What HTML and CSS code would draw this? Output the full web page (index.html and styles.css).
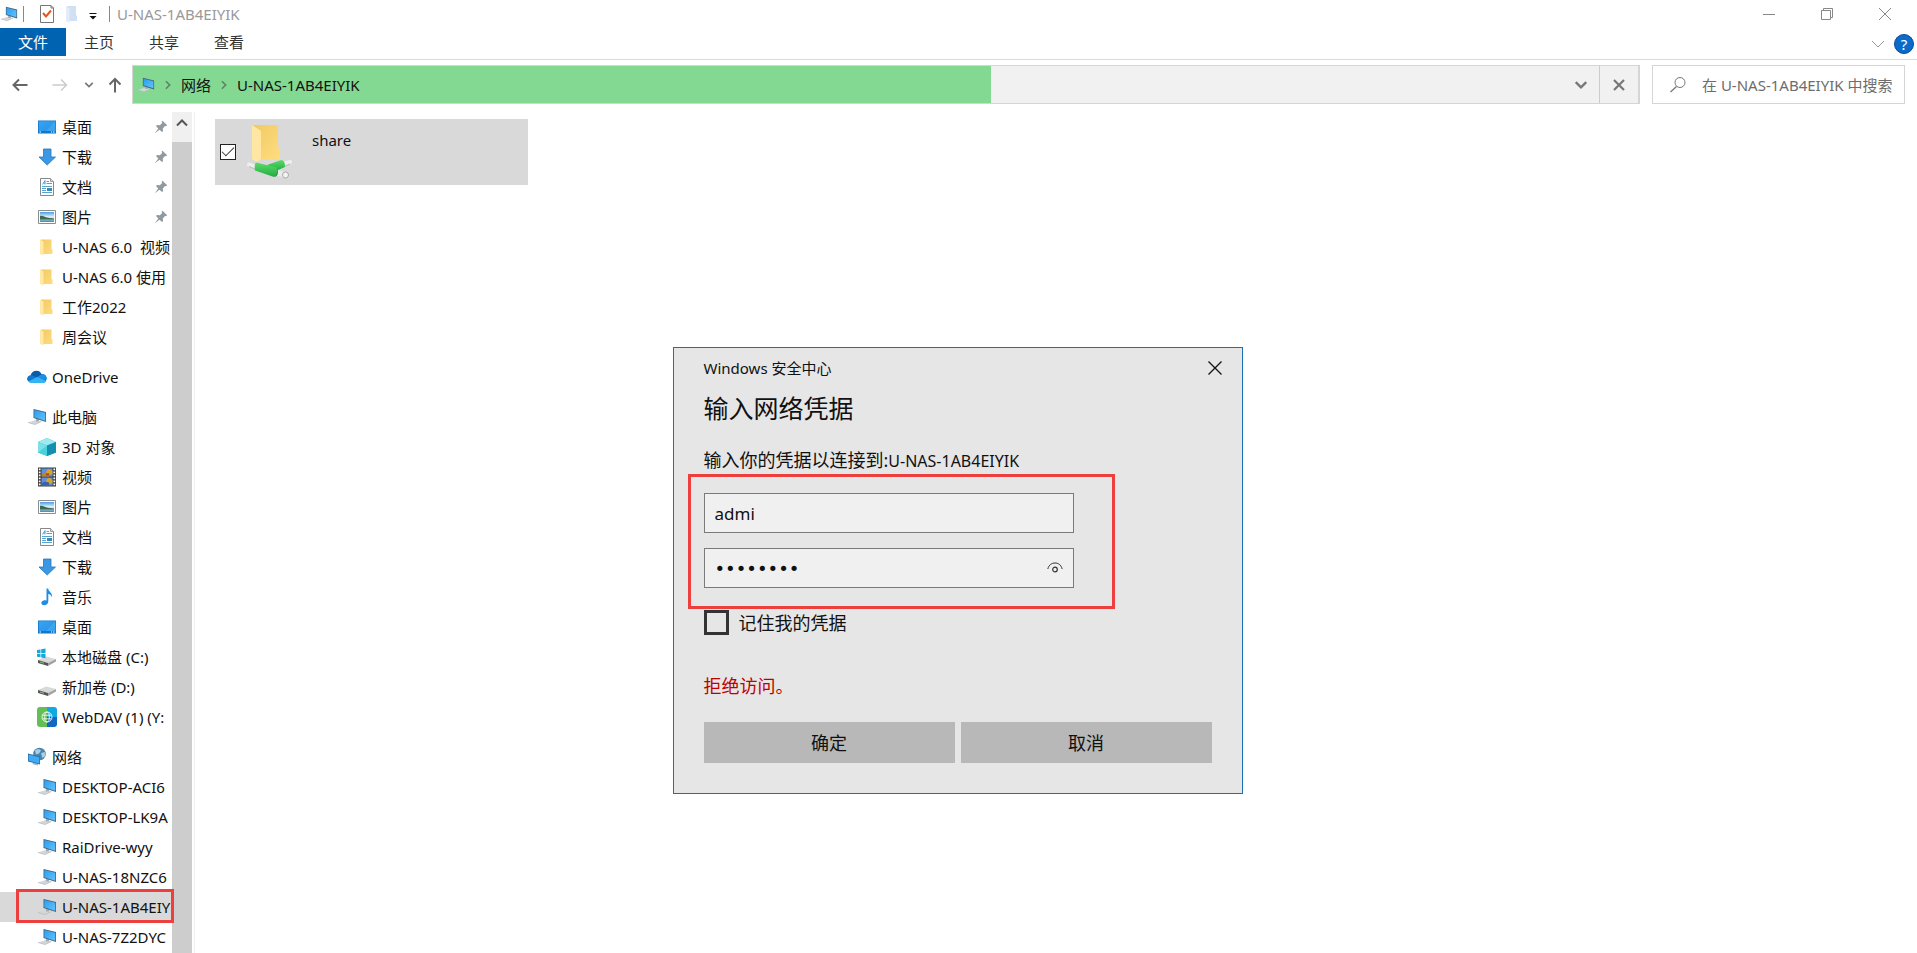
FILE: index.html
```
<!DOCTYPE html>
<html lang="zh-CN">
<head>
    <meta charset="UTF-8">
    <title>U-NAS-1AB4EIYIK</title>
    <link rel="stylesheet" href="styles.css">
</head>
<body>
    <!-- shared icons -->
    <svg class="sprite" aria-hidden="true">
        <defs>
            <linearGradient id="g-blue" x1="0" y1="0" x2="1" y2="1"><stop offset="0" stop-color="#35a5f3"/><stop offset="1" stop-color="#2b8fe6"/></linearGradient>
            <linearGradient id="g-screen" x1="0" y1="0" x2="1" y2="1"><stop offset="0" stop-color="#2a9df0"/><stop offset="1" stop-color="#62c3ff"/></linearGradient>
            <linearGradient id="g-folder" x1="0" y1="0" x2="1" y2="1"><stop offset="0" stop-color="#f0ca62"/><stop offset="1" stop-color="#ffdc80"/></linearGradient>
            <linearGradient id="g-green" x1="0" y1="0" x2="0" y2="1"><stop offset="0" stop-color="#5fd96c"/><stop offset="1" stop-color="#1fae3f"/></linearGradient>
            <linearGradient id="g-sky" x1="0" y1="0" x2="0" y2="1"><stop offset="0" stop-color="#4f9be0"/><stop offset=".5" stop-color="#e6f4fb"/><stop offset="1" stop-color="#4b86a8"/></linearGradient>
            <symbol id="i-pc" viewBox="0 0 20 20">
                <path d="M1 15.500 8.500 13l6 1.500L8 17.500z" fill="#d3d7da"/>
                <path d="M1 15.500 8 17.500l6.500-3" fill="none" stroke="#b2b8bd" stroke-width=".7"/>
                <path d="M9 11.500 12 12v2.500H9z" fill="#a5adb4"/>
                <path d="M6.500 2 19 5v10L6.500 11z" fill="#46647d"/>
                <path d="M7.300 3 18.200 5.700v8L7.300 10.300z" fill="url(#g-screen)"/>
            </symbol>
            <symbol id="i-desktop" viewBox="0 0 20 20">
                <path d="M1 3.500h18v13H1z" fill="#0f76c8"/>
                <path d="M1.700 4.200h16.600v9.800H1.700z" fill="url(#g-blue)"/>
                <path d="M9 14 18.300 4.200V14z" fill="#4db4f8" opacity=".5"/>
                <path d="M2.500 15h1.500M14 15h1M16 15h1.500" stroke="#fff"/>
            </symbol>
            <symbol id="i-download" viewBox="0 0 20 20">
                <path d="M6.500 2h7.500v8h4.500L10.200 18 2 10h4.500z" fill="#3d98e4" stroke="#2277c2" stroke-width=".8"/>
            </symbol>
            <symbol id="i-doc" viewBox="0 0 20 20">
                <path d="M3.500 1.500h10L16.500 4.500v14h-13z" fill="#fff" stroke="#85898c"/>
                <path d="M13.500 1.500v3h3" fill="#ddd" stroke="#85898c" stroke-width=".8"/>
                <path d="M5.500 7.500 8 3.500v4M6.500 6H8M9.500 4.500H12M9.500 6.500h5.500M5 9.500h10M5 11.500h4M5 13.500h4M5 15.500h10" stroke="#3f9bcb" stroke-width=".9" fill="none"/>
                <path d="M10 11h5v3h-5z" fill="#3c86ad"/>
            </symbol>
            <symbol id="i-picture" viewBox="0 0 20 20">
                <path d="M1.500 3.500h17v13h-17z" fill="#fff" stroke="#8a8e92"/>
                <path d="M3 5h14v10H3z" fill="url(#g-sky)"/>
                <path d="M3 9c3-1 5 1.500 8 1.800l6 .7V12.500H3z" fill="#3b6b50"/>
            </symbol>
            <symbol id="i-folder" viewBox="0 0 20 20">
                <path d="M4 2.500h10.500V12l1 1v4H4z" fill="url(#g-folder)"/>
                <path d="M3 2.500 6.500 4.500V18.500L3 17z" fill="#ffe8a8"/>
            </symbol>
            <symbol id="i-cloud" viewBox="0 0 20 20">
                <path d="M5 15.500A4 4 0 0 1 3.500 8.500 6 6 0 0 1 14.500 7 4.500 4.500 0 0 1 17 15.500z" fill="#1177d1"/>
                <path d="M4 8.500C5 3.500 12 1.500 14.500 7.500L9 11z" fill="#0a5cab"/>
                <path d="M0 12.500C0 9.500 2 8 4.500 8.200L10 10.500 2 15z" fill="#1177d1"/>
                <path d="M9 11 14.500 7.300C18.500 7 20 9.500 19.800 12.500z" fill="#1a8fe3"/>
                <path d="M1.500 14.500 10 10l9.500 4C18.500 15.500 17.500 16 16 16H4Q2.500 16 1.500 14.500z" fill="#35b3f2"/>
            </symbol>
            <symbol id="i-cube" viewBox="0 0 20 20">
                <path d="M1 5 10 1l9 4v10.500L10 19 1 15.500z" fill="#28b4cc"/>
                <path d="M1 5 10 1l9 4-9 3.500z" fill="#9eeaf0"/>
                <path d="M1 5l9 3.500V19l-9-3.500z" fill="#4bd0dd"/>
                <path d="M1 5v10.500L10 8.500z" fill="#7be0e8"/>
                <path d="M19 5v10.500L10 19V8.500z" fill="#138fb0"/>
            </symbol>
            <symbol id="i-film" viewBox="0 0 20 20">
                <path d="M1 .5h18v19H1z" fill="#3b3b3b"/>
                <path d="M4.500 1.500h11v8h-11zM4.500 10.500h11v8h-11z" fill="#5f8fdf"/>
                <path d="M9 5l2-3 3 .5 1.500 2v3H9z" fill="#d5a622"/>
                <path d="M5 7l3-1.500 4 1v3H5z" fill="#b8872a"/>
                <path d="M9 6.500h3v2H9z" fill="#c23a2e"/>
                <path d="M9 14l2-3 3 .5 1.500 2v3H9z" fill="#d5a622"/>
                <path d="M5 16l3-1.500 4 1v3H5z" fill="#3d5fb0"/>
                <path d="M2.700 1.500v17.500M17.300 1.500v17.500" stroke="#fff" stroke-width="1.700" stroke-dasharray="1.700 1.300"/>
            </symbol>
            <symbol id="i-music" viewBox="0 0 20 20">
                <path d="M9.500 1.500h1.700c.3 3.500 4.800 4 3.800 9-.6-2.500-2-3.200-3.700-3.500v7.500c0 2.500-2.300 4-4.500 3.800-3-.3-3.500-4.300.5-5 1-.2 1.700 0 2.200.2z" fill="#1e8fe8"/>
            </symbol>
            <symbol id="i-drive" viewBox="0 0 20 20">
                <path d="M1 13 9 9.500l10 2.500-8 4z" fill="#d9d9d9"/>
                <path d="M1 13l10 3v3L1 16z" fill="#555"/>
                <path d="M11 16l8-4v2.500L11 19z" fill="#a2a2a2"/>
                <path d="M3 15l4 1.200" stroke="#9ad69a" stroke-width=".8"/>
            </symbol>
            <symbol id="i-drive-win" viewBox="0 0 20 20">
                <use href="#i-drive" width="20" height="20"/>
                <path d="M0 3l3.500-.6V6H0zM4.200 2.200 8.500 1.500V6H4.200zM0 6.700h3.500v3.600L0 9.700zM4.200 6.700h4.300v4.500l-4.300-.7z" fill="#13a9e0"/>
            </symbol>
            <symbol id="i-webdav" viewBox="0 0 20 20">
                <path d="M3 0h7v20H3a3 3 0 0 1-3-3V3a3 3 0 0 1 3-3z" fill="#63bf55"/>
                <path d="M10 0h7a3 3 0 0 1 3 3v7H10z" fill="#12a8e0"/>
                <path d="M10 10h10v7a3 3 0 0 1-3 3h-7z" fill="#1268c0"/>
                <g fill="none" stroke="#fff" stroke-width=".8"><circle cx="10" cy="10" r="5"/><ellipse cx="10" cy="10" rx="2.300" ry="5"/><path d="M5.500 8.200h9M5.500 11.800h9"/></g>
            </symbol>
            <symbol id="i-network" viewBox="0 0 20 20">
                <circle cx="12.500" cy="7" r="6.300" fill="#4686ad"/>
                <path d="M8 3.500c2-2 5-1.500 6 0l-2 3-3 1zM14 6l4-1 .3 4-3 2z" fill="#a9d0e2"/>
                <path d="M7 15.500 11 17v1.500L5 17z" fill="#a5b4c0"/>
                <path d="M1 6.500 13 9.500v8L1 14.500z" fill="#256ea8"/>
                <path d="M1.700 7.500 12.300 10.200v6.200L1.700 13.700z" fill="#3fabf5"/>
            </symbol>
            <symbol id="i-pin" viewBox="0 0 14 14">
                <path d="M8.500.8 13.200 5.300 12 6.200l-1-.2-2.200 2.500.2 2.700-1 .9L5.500 9.700.8 13.300 4.300 8.500 2 6l1-1 2.800.2L8.200 3 7.600 1.700z" fill="#909aa1"/>
            </symbol>
            <symbol id="i-chevron" viewBox="0 0 12 12">
                <path d="M1.500 3.500 6 8l4.500-4.500" fill="none" stroke="currentColor" stroke-width="2"/>
            </symbol>
        </defs>
    </svg>

    <div class="explorer">
        <header class="titlebar">
            <svg class="icon-app"><use href="#i-pc"/></svg>
            <span class="divider"></span>
            <div class="quick-access">
                <button class="quick-btn" aria-label="属性"><svg width="16" height="20" viewBox="0 0 16 20"><path d="M1.500 1.500H12L14.500 4v14.500h-13z" fill="#fff" stroke="#777"/><path d="M12 1.500V4h2.500" fill="none" stroke="#777"/><path d="M4 9l3 3.500 5-6" fill="none" stroke="#e2571f" stroke-width="2"/></svg></button>
                <button class="quick-btn" aria-label="新建文件夹"><svg width="14" height="20" viewBox="0 0 14 20"><path d="M2 2h9v9l1 1v5H2z" fill="#d2e0f3"/><path d="M1 2 4.500 4.500V19L1 17z" fill="#e3ecf8"/></svg></button>
                <button class="quick-btn" aria-label="自定义快速访问工具栏"><svg width="8" height="20" viewBox="0 0 8 20"><path d="M.5 9.500h7" stroke="#111"/><path d="M.5 12h7L4 15.500z" fill="#111"/></svg></button>
            </div>
            <span class="divider"></span>
            <span class="window-title">U-NAS-1AB4EIYIK</span>
            <div class="window-controls">
                <button aria-label="最小化"><svg width="14" height="14"><path d="M1 7.500h12" stroke="#888"/></svg></button>
                <button aria-label="还原"><svg width="14" height="14" fill="none" stroke="#888"><path d="M1.500 3.500h9v9h-9zM3.500 3.500v-2h9v9h-2"/></svg></button>
                <button aria-label="关闭"><svg width="14" height="14"><path d="M1 1l12 12M13 1 1 13" stroke="#888"/></svg></button>
            </div>
        </header>

        <nav class="ribbon">
            <button class="tab tab-file">文件</button>
            <button class="tab">主页</button>
            <button class="tab">共享</button>
            <button class="tab">查看</button>
            <div class="ribbon-right">
                <button class="ribbon-toggle" aria-label="展开功能区"><svg width="14" height="8"><path d="M1 1l6 6 6-6" fill="none" stroke="#999"/></svg></button>
                <button class="help" aria-label="帮助">?</button>
            </div>
        </nav>

        <div class="toolbar">
            <div class="history">
                <button aria-label="后退"><svg width="16" height="14" fill="none" stroke="#666" stroke-width="2"><path d="M15.500 7H2M7 1.500 1.500 7 7 12.500"/></svg></button>
                <button aria-label="前进" disabled><svg width="16" height="14" fill="none" stroke="#ccc" stroke-width="1.500"><path d="M.5 7H14M9 1.500 14.500 7 9 12.500"/></svg></button>
                <button class="recent" aria-label="最近位置"><svg width="10" height="10"><use href="#i-chevron"/></svg></button>
                <button class="up" aria-label="上移"><svg width="14" height="16" fill="none" stroke="#666" stroke-width="2"><path d="M7 15.500V2M1.500 7.500 7 2l5.500 5.500"/></svg></button>
            </div>
            <div class="address">
                <div class="progress" style="width: 57%"></div>
                <div class="crumbs">
                    <svg class="icon-app"><use href="#i-pc"/></svg>
                    <svg class="crumb-arrow"><use href="#i-chevron"/></svg>
                    <a href="#">网络</a>
                    <svg class="crumb-arrow"><use href="#i-chevron"/></svg>
                    <a href="#">U-NAS-1AB4EIYIK</a>
                </div>
                <button class="address-drop" aria-label="以前的位置"><svg width="14" height="14"><use href="#i-chevron"/></svg></button>
                <button class="address-stop" aria-label="停止"><svg width="12" height="12"><path d="M1 1l10 10M11 1 1 11" stroke="#777" stroke-width="2.200"/></svg></button>
            </div>
            <div class="search">
                <svg width="18" height="18" fill="none" stroke="#777"><circle cx="11" cy="6.500" r="5"/><path d="M7.500 10.500 1.500 16" stroke-width="1.300"/></svg>
                <input type="text" aria-label="搜索" placeholder="在 U-NAS-1AB4EIYIK 中搜索">
            </div>
        </div>

        <div class="main">
            <aside class="sidebar">
                <div class="tree">
                    <ul>
                        <li><a href="#"><svg><use href="#i-desktop"/></svg><span>桌面</span><svg class="pin"><use href="#i-pin"/></svg></a></li>
                        <li><a href="#"><svg><use href="#i-download"/></svg><span>下载</span><svg class="pin"><use href="#i-pin"/></svg></a></li>
                        <li><a href="#"><svg><use href="#i-doc"/></svg><span>文档</span><svg class="pin"><use href="#i-pin"/></svg></a></li>
                        <li><a href="#"><svg><use href="#i-picture"/></svg><span>图片</span><svg class="pin"><use href="#i-pin"/></svg></a></li>
                        <li><a href="#"><svg><use href="#i-folder"/></svg><span>U-NAS 6.0&nbsp; 视频</span></a></li>
                        <li><a href="#"><svg><use href="#i-folder"/></svg><span>U-NAS 6.0 使用</span></a></li>
                        <li><a href="#"><svg><use href="#i-folder"/></svg><span>工作2022</span></a></li>
                        <li><a href="#"><svg><use href="#i-folder"/></svg><span>周会议</span></a></li>
                    </ul>
                    <ul>
                        <li class="root"><a href="#"><svg><use href="#i-cloud"/></svg><span>OneDrive</span></a></li>
                    </ul>
                    <ul>
                        <li class="root"><a href="#"><svg><use href="#i-pc"/></svg><span>此电脑</span></a></li>
                        <li><a href="#"><svg><use href="#i-cube"/></svg><span>3D 对象</span></a></li>
                        <li><a href="#"><svg><use href="#i-film"/></svg><span>视频</span></a></li>
                        <li><a href="#"><svg><use href="#i-picture"/></svg><span>图片</span></a></li>
                        <li><a href="#"><svg><use href="#i-doc"/></svg><span>文档</span></a></li>
                        <li><a href="#"><svg><use href="#i-download"/></svg><span>下载</span></a></li>
                        <li><a href="#"><svg><use href="#i-music"/></svg><span>音乐</span></a></li>
                        <li><a href="#"><svg><use href="#i-desktop"/></svg><span>桌面</span></a></li>
                        <li><a href="#"><svg><use href="#i-drive-win"/></svg><span>本地磁盘 (C:)</span></a></li>
                        <li><a href="#"><svg><use href="#i-drive"/></svg><span>新加卷 (D:)</span></a></li>
                        <li><a href="#"><svg><use href="#i-webdav"/></svg><span>WebDAV (1) (Y:</span></a></li>
                    </ul>
                    <ul>
                        <li class="root"><a href="#"><svg><use href="#i-network"/></svg><span>网络</span></a></li>
                        <li><a href="#"><svg><use href="#i-pc"/></svg><span>DESKTOP-ACI6</span></a></li>
                        <li><a href="#"><svg><use href="#i-pc"/></svg><span>DESKTOP-LK9A</span></a></li>
                        <li><a href="#"><svg><use href="#i-pc"/></svg><span>RaiDrive-wyy</span></a></li>
                        <li><a href="#"><svg><use href="#i-pc"/></svg><span>U-NAS-18NZC6</span></a></li>
                        <li class="selected"><a href="#"><svg><use href="#i-pc"/></svg><span>U-NAS-1AB4EIY</span></a><i class="mark"></i></li>
                        <li><a href="#"><svg><use href="#i-pc"/></svg><span>U-NAS-7Z2DYC</span></a></li>
                    </ul>
                </div>
                <div class="scrollbar">
                    <button aria-label="向上滚动"><svg width="12" height="8"><path d="M1 6.500 6 1.500l5 5" fill="none" stroke="#555" stroke-width="2"/></svg></button>
                    <div class="thumb"></div>
                </div>
            </aside>

            <main class="content">
                <label class="tile">
                    <input type="checkbox" checked>
                    <svg width="46" height="58" viewBox="0 0 46 58">
                        <path d="M6 2h25v21l2 3v10H10z" fill="url(#g-folder)"/>
                        <path d="M5 2l9 6v28l-4 3-5-3z" fill="#ffe6a3"/>
                        <path d="M2 41.500 9 44M37 41l6-2" stroke="#eee" stroke-width="4" stroke-linecap="round"/>
                        <path d="M2 43.500 8 46M38 43l5-2" stroke="#bbb"/>
                        <path d="M20 42l14-5q4 0 4 7l-9 4z" fill="url(#g-green)"/>
                        <path d="M30 49.500l8 2.500" stroke="#eaeaea" stroke-width="6"/>
                        <circle cx="38.500" cy="52" r="3" fill="#f3f3f3" stroke="#aaa"/>
                        <path d="M9 39.500 30 44.500q1 6-3 9.500L8 47.500q-1-6 1-8z" fill="url(#g-green)"/>
                        <path d="M30 44.500q1 6-3 9.500 6-1 3-9.500z" fill="#118a30"/>
                    </svg>
                    <span>share</span>
                </label>
            </main>
        </div>
    </div>

    <form class="dialog" role="dialog" aria-labelledby="dialog-title">
        <div class="dialog-bar">
            <span>Windows 安全中心</span>
            <button type="button" aria-label="关闭"><svg width="14" height="14"><path d="M.5.5l13 13M13.500.5l-13 13" stroke="#111" stroke-width="1.300"/></svg></button>
        </div>
        <h1 id="dialog-title">输入网络凭据</h1>
        <p class="prompt">输入你的凭据以连接到:<span class="host">U-NAS-1AB4EIYIK</span></p>
        <div class="fields">
            <input type="text" aria-label="用户名" value="admi">
            <div class="password">
                <input type="password" aria-label="密码" value="password">
                <button type="button" aria-label="显示密码"><svg width="16" height="12" fill="none" stroke="#333"><path d="M.8 7C2 2.500 5 1 8 1s6 1.500 7.200 6"/><circle cx="8" cy="7.500" r="2.300" stroke-width="1.200"/></svg></button>
            </div>
            <i class="mark"></i>
        </div>
        <label class="remember"><input type="checkbox"><span>记住我的凭据</span></label>
        <p class="error">拒绝访问。</p>
        <div class="actions">
            <button type="submit">确定</button>
            <button type="button">取消</button>
        </div>
    </form>
</body>
</html>
```
FILE: styles.css
```
* {
    box-sizing: border-box;
}
body {
    margin: 0;
    font-family: "Noto Sans", "Noto Sans CJK SC", sans-serif;
    font-size: 15px;
    line-height: 20px;
    color: #111;
    background-color: #fff;
    overflow: hidden;
}
button, input {
    font: inherit;
    color: inherit;
    margin: 0;
}
button {
    display: flex;
    align-items: center;
    justify-content: center;
    padding: 0;
    border: none;
    background: none;
}
a {
    color: inherit;
    text-decoration: none;
}
svg {
    display: block;
    flex-shrink: 0;
}
.sprite {
    position: absolute;
    width: 0;
    height: 0;
}
.explorer {
    display: flex;
    flex-direction: column;
    height: 100vh;
}

/* title bar */
.titlebar {
    display: flex;
    align-items: center;
    height: 28px;
}
.icon-app {
    width: 18px;
    height: 18px;
}
.divider {
    width: 1px;
    height: 16px;
    margin: 0 5px;
    background-color: #888;
}
.quick-access {
    display: flex;
    gap: 10px;
    padding: 0 7px 0 10px;
}
.window-title {
    margin-left: 2px;
    color: #999;
}
.window-controls {
    display: flex;
    margin-left: auto;
    padding-right: 3px;
}
.window-controls button {
    width: 58px;
    height: 26px;
}

/* ribbon */
.ribbon {
    display: flex;
    gap: 1px;
    height: 32px;
    border-bottom: 1px solid #dadbdc;
}
.tab {
    height: 28px;
    padding: 0 17px;
    color: #333;
}
.tab-file {
    min-width: 66px;
    color: #fff;
    background-color: #0063b1;
}
.ribbon-right {
    display: flex;
    align-items: center;
    gap: 9px;
    margin-left: auto;
    padding-right: 3px;
}
.help {
    width: 20px;
    height: 20px;
    border: 1px solid #0a4c92;
    border-radius: 50%;
    color: #fff;
    background-color: #0a6bcb;
}

/* address row */
.toolbar {
    display: flex;
    gap: 12px;
    padding: 5px 12px 0 12px;
}
.history {
    display: flex;
    align-items: center;
    gap: 24px;
    width: 108px;
    color: #777;
}
.recent {
    margin-left: -8px;
}
.up {
    margin-left: -10px;
}
.address {
    position: relative;
    display: flex;
    flex: 1;
    height: 39px;
    border: 1px solid #d5d5d5;
    border-right-width: 2px;
    background-color: #f1f1f1;
}
.progress {
    position: absolute;
    left: 0;
    top: 0;
    bottom: 0;
    background-color: #84d992;
}
.crumbs {
    position: relative;
    display: flex;
    flex: 1;
    align-items: center;
    gap: 8px;
    padding-left: 4px;
}
.crumb-arrow {
    width: 10px;
    height: 10px;
    color: #5f8565;
    transform: rotate(-90deg);
}
.address-drop {
    width: 37px;
    color: #777;
}
.address-stop {
    width: 39px;
    border-left: 1px solid #ccc;
}
.search {
    display: flex;
    align-items: center;
    gap: 15px;
    width: 253px;
    height: 39px;
    padding-left: 16px;
    border: 1px solid #d5d5d5;
}
.search input {
    flex: 1;
    min-width: 0;
    padding: 0;
    border: none;
    outline: none;
    background: none;
}
.search input::placeholder {
    color: #6d6d6d;
}

/* navigation pane */
.main {
    display: flex;
    flex: 1;
    min-height: 0;
    padding-top: 8px;
}
.sidebar {
    display: flex;
    width: 195px;
    border-right: 1px solid #eee;
}
.tree {
    width: 172px;
}
.tree ul {
    margin: 0 0 10px;
    padding: 0;
    list-style: none;
}
.tree li {
    position: relative;
}
.tree a {
    display: flex;
    align-items: center;
    gap: 5px;
    height: 30px;
    padding-left: 37px;
    overflow: hidden;
    white-space: nowrap;
}
.tree .root a {
    padding-left: 27px;
}
.tree svg {
    width: 20px;
    height: 20px;
}
.tree .pin {
    width: 14px;
    height: 14px;
    margin: 0 4px 0 auto;
}
.selected {
    background-color: #d9d9d9;
}
.mark {
    position: absolute;
    border: 3px solid #ee3f3f;
    pointer-events: none;
}
.selected .mark {
    inset: -3px -2px -1px 16px;
}
.scrollbar {
    display: flex;
    flex-direction: column;
    width: 20px;
}
.scrollbar button {
    height: 30px;
    padding-bottom: 8px;
    background-color: #f0f0f0;
}
.thumb {
    flex: 1;
    background-color: #cdcdcd;
}

/* files */
.content {
    flex: 1;
    padding: 7px 20px;
}
.tile {
    display: flex;
    align-items: center;
    width: 313px;
    height: 66px;
    padding-left: 5px;
    background-color: #d9d9d9;
}
.tile input {
    appearance: none;
    width: 16px;
    height: 16px;
    margin: 0 11px 0 0;
    border: 1px solid #222;
    background-color: #fff;
}
.tile input:checked::before {
    content: "";
    display: block;
    width: 11px;
    height: 5px;
    margin: 2px 1px;
    border-left: 1px solid #333;
    border-bottom: 1px solid #333;
    transform: rotate(-45deg);
}
.tile span {
    align-self: flex-start;
    margin: 11px 0 0 19px;
}

/* credentials dialog */
.dialog {
    position: absolute;
    left: calc(50% - 286px);
    top: 347px;
    width: 570px;
    padding: 0 30px 30px;
    border: 1px solid #1a6fb5;
    background-color: #e6e6e6;
    font-size: 18px;
    line-height: 24px;
}
.dialog-bar {
    display: flex;
    justify-content: space-between;
    align-items: center;
    height: 40px;
    margin-right: -10px;
    font-size: 15px;
}
.dialog h1 {
    margin: 2px 0 0;
    font-size: 25px;
    line-height: 36px;
    font-weight: 400;
}
.dialog p {
    margin: 0;
}
.prompt {
    padding-top: 22px;
}
.host {
    font-size: 16px;
}
.fields {
    position: relative;
    display: flex;
    flex-direction: column;
    gap: 15px;
    width: 370px;
    margin-top: 20px;
}
.fields input {
    width: 100%;
    height: 40px;
    padding: 0 10px;
    border: 1px solid #7a7a7a;
    background-color: #f0f0f0;
    outline: none;
    font-size: 17px;
}
.fields input[type="password"] {
    font-family: "DejaVu Sans", sans-serif;
    font-size: 18px;
}
.password {
    position: relative;
}
.password button {
    position: absolute;
    right: 10px;
    top: 12px;
    width: 18px;
    height: 16px;
}
.fields .mark {
    inset: -19px -41px -21px -16px;
}
.remember {
    display: flex;
    align-items: center;
    gap: 10px;
    width: fit-content;
    margin-top: 22px;
}
.remember input {
    appearance: none;
    width: 25px;
    height: 25px;
    border: 3px solid #333;
    background-color: #e6e6e6;
}
.error {
    padding-top: 39px;
    color: #c00000;
}
.actions {
    display: flex;
    gap: 6px;
    margin-top: 24px;
}
.actions button {
    flex: 1;
    height: 41px;
    background-color: #b8b8b8;
}
```
